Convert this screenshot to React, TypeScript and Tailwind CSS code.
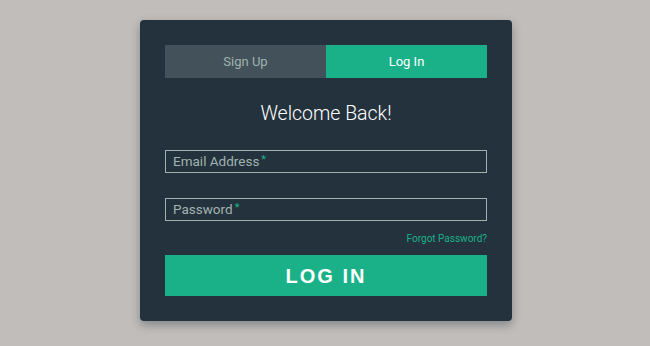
export default function App() {
  return (
    <div className="flex h-[346px] w-full items-start justify-center bg-[#c1bdba] pl-[2px] pt-[20px] font-['Roboto',sans-serif]">
      <div className="w-[372px] rounded-[4px] bg-[#24323d] px-[25px] pb-[25px] pt-[25px] shadow-[0_4px_10px_rgba(19,35,47,0.35)]">
        <div className="flex h-[33px]">
          <button className="flex-1 bg-[#43525a] text-[13px] text-[#a0b3b0]">Sign Up</button>
          <button className="flex-1 bg-[#1ab188] text-[13px] text-white">Log In</button>
        </div>
        <h1 className="mt-[22px] text-center text-[19.5px] font-light leading-[28px] text-white">Welcome Back!</h1>
        <div className="mt-[22px] flex h-[23px] items-center border border-[#a0b3b0] px-[7px] text-[13.5px] text-[#a0b3b0]">
          Email Address<span className="relative top-[-2px] ml-[2px] text-[11px] leading-[10px] text-[#1ab188]">*</span>
        </div>
        <div className="mt-[25px] flex h-[23px] items-center border border-[#a0b3b0] px-[7px] text-[13.5px] text-[#a0b3b0]">
          Password<span className="relative top-[-2px] ml-[2px] text-[11px] leading-[10px] text-[#1ab188]">*</span>
        </div>
        <div className="mt-[12px] text-right text-[10px] leading-[12px] text-[#1ab188]">Forgot Password?</div>
        <button className="mt-[10px] flex h-[41px] w-full items-center justify-center bg-[#1ab188] font-['Liberation_Sans',sans-serif] text-[20px] font-bold tracking-[2px] text-white">
          LOG IN
        </button>
      </div>
    </div>
  )
}
